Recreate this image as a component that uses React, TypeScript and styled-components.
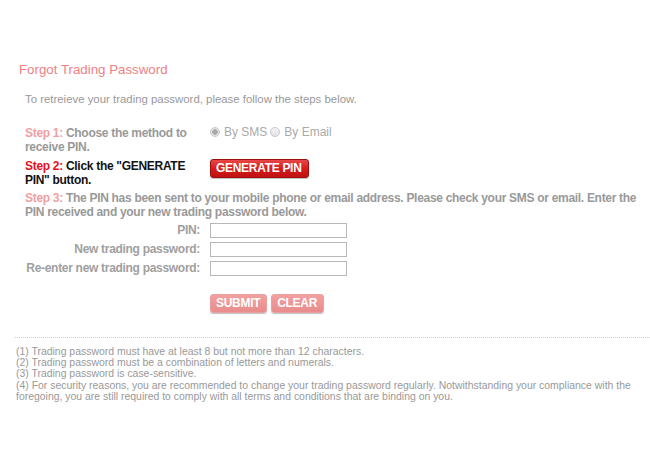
import React from 'react';
import styled, { createGlobalStyle } from 'styled-components';

const Global = createGlobalStyle`
  html, body { margin: 0; padding: 0; background: #fff; }
  body { font-family: "Liberation Sans", Arial, sans-serif; }
`;

const Page = styled.div`
  width: 650px;
  height: 462px;
  box-sizing: border-box;
  padding-top: 62px;
  overflow: hidden;
`;

const Title = styled.h1`
  margin: 0 0 0 19px;
  font-size: 13.3px;
  line-height: 16px;
  font-weight: normal;
  color: #ef7f83;
`;

const Intro = styled.p`
  margin: 14px 0 0 25px;
  font-size: 11.4px;
  line-height: 14px;
  color: #999;
`;

const Steps = styled.div`
  margin: 20px 0 0 25px;
  display: grid;
  grid-template-columns: 185px 1fr;
  width: 615px;
  font-size: 12px;
  line-height: 14px;
  font-weight: bold;
  letter-spacing: -0.3px;
  color: #999;
`;

const StepText = styled.p<{ $active?: boolean; $full?: boolean; $gap?: number }>`
  margin: ${(p) => p.$gap ?? 0}px 0 0;
  grid-column: ${(p) => (p.$full ? '1 / -1' : 'auto')};
  padding-right: ${(p) => (p.$full ? 0 : 12)}px;
  color: ${(p) => (p.$active ? '#111' : '#999')};
`;

const StepNo = styled.span<{ $active?: boolean }>`
  color: ${(p) => (p.$active ? '#e8101a' : '#f0a0a2')};
`;

const Cell = styled.div<{ $gap?: number }>`
  margin-top: ${(p) => p.$gap ?? 0}px;
  display: flex;
  align-items: flex-start;
`;

const RadioGroup = styled.div`
  display: flex;
  align-items: center;
  font-weight: normal;
  letter-spacing: 0;
  color: #aaa;
  margin-top: -1px;
`;

const Radio = styled.span<{ $checked?: boolean }>`
  display: inline-block;
  width: 10px;
  height: 10px;
  box-sizing: border-box;
  border-radius: 50%;
  border: 1px solid #c8c8c8;
  background: ${(p) =>
    p.$checked
      ? 'radial-gradient(circle, #a8a8a8 0 2.5px, #e4e4e4 3px)'
      : 'linear-gradient(#f4f4f4, #e2e2e2)'};
  margin-right: 4px;
`;

const RadioLabel = styled.span`
  margin-right: 3px;
`;

const Button = styled.button<{ $faded?: boolean }>`
  font-family: "Liberation Sans", Arial, sans-serif;
  font-weight: bold;
  font-size: 12px;
  line-height: 12px;
  letter-spacing: -0.3px;
  color: #fff;
  padding: 2px 6px 3px 5px;
  border: 1px solid ${(p) => (p.$faded ? '#e8a0a0' : '#9a1010')};
  border-radius: 3px;
  background: ${(p) =>
    p.$faded
      ? 'linear-gradient(#f2a0a0, #e88c8c)'
      : 'linear-gradient(#e84848 0%, #d81c1c 50%, #c01010 100%)'};
  box-shadow: 0 1px 1px rgba(0, 0, 0, 0.25);
  margin: 0 4px 0 0;
  cursor: pointer;
`;

const Form = styled.div`
  grid-column: 1 / -1;
  display: grid;
  grid-template-columns: 185px 1fr;
  row-gap: 4px;
  margin-top: 4px;
`;

const Label = styled.label`
  text-align: right;
  padding-right: 10px;
  line-height: 15px;
  color: #a0a0a0;
`;

const Input = styled.input`
  width: 137px;
  height: 15px;
  box-sizing: border-box;
  border: 1px solid #b8b8b8;
  padding: 0;
  margin: 0;
`;

const Actions = styled.div`
  grid-column: 2;
  margin-top: 18px;
  display: flex;
`;

const Divider = styled.hr`
  margin: 24px 0 0 15px;
  border: 0;
  border-top: 1px dotted #d0d0d0;
`;

const Notes = styled.div`
  margin: 8px 0 0 16px;
  width: 625px;
  font-size: 10.45px;
  line-height: 11.2px;
  color: #999;
`;

const Note = styled.div``;

export default function App() {
  return (
    <Page>
      <Global />
      <Title>Forgot Trading Password</Title>
      <Intro>To retreieve your trading password, please follow the steps below.</Intro>
      <Steps>
        <StepText>
          <StepNo>Step 1:</StepNo> <span>Choose the method to receive PIN.</span>
        </StepText>
        <Cell>
          <RadioGroup>
            <Radio $checked />
            <RadioLabel>By SMS</RadioLabel>
            <Radio />
            <RadioLabel>By Email</RadioLabel>
          </RadioGroup>
        </Cell>
        <StepText $active $gap={5}>
          <StepNo $active>Step 2:</StepNo> <span>Click the "GENERATE PIN" button.</span>
        </StepText>
        <Cell $gap={5}>
          <Button>GENERATE PIN</Button>
        </Cell>
        <StepText $full $gap={4}>
          <StepNo>Step 3:</StepNo>{' '}
          <span>
            The PIN has been sent to your mobile phone or email address. Please check your SMS or email. Enter the PIN received and your new trading password below.
          </span>
        </StepText>
        <Form>
          <Label>PIN:</Label>
          <Input type="text" />
          <Label>New trading password:</Label>
          <Input type="password" />
          <Label>Re-enter new trading password:</Label>
          <Input type="password" />
        </Form>
        <Actions>
          <Button $faded>SUBMIT</Button>
          <Button $faded>CLEAR</Button>
        </Actions>
      </Steps>
      <Divider />
      <Notes>
        <Note>(1) Trading password must have at least 8 but not more than 12 characters.</Note>
        <Note>(2) Trading password must be a combination of letters and numerals.</Note>
        <Note>(3) Trading password is case-sensitive.</Note>
        <Note>
          (4) For security reasons, you are recommended to change your trading password regularly. Notwithstanding your compliance with the foregoing, you are still required to comply with all terms and conditions that are binding on you.
        </Note>
      </Notes>
    </Page>
  );
}
